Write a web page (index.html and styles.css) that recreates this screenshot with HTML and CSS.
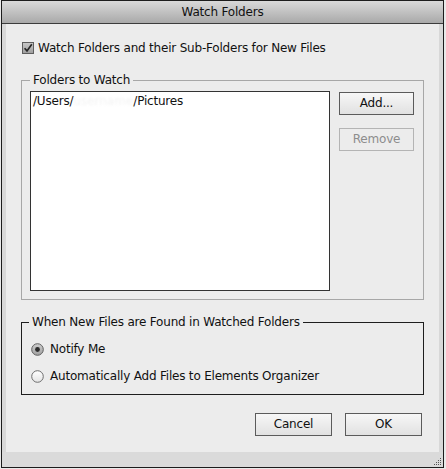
FILE: index.html
```html
<!DOCTYPE html>
<html>
<head>
<meta charset="utf-8">
<title>Watch Folders</title>
<link rel="stylesheet" href="styles.css">
</head>
<body>
<div class="window">
  <div class="titlebar">Watch Folders</div>
  <div class="main">
    <div class="panel">
      <label class="check-row">
        <svg class="checkbox" width="12" height="12" viewBox="0 0 12 12">
          <defs>
            <linearGradient id="cbg" x1="0" y1="0" x2="0" y2="1">
              <stop offset="0" stop-color="#c9c9c9"/>
              <stop offset="1" stop-color="#9d9d9d"/>
            </linearGradient>
          </defs>
          <rect x="0.5" y="0.5" width="11" height="11" fill="url(#cbg)" stroke="#5e5e5e"/>
          <path d="M2.6 6.2 L5 8.9 L9.8 2.2" fill="none" stroke="#262626" stroke-width="1.7"/>
        </svg>
        <span>Watch Folders and their Sub-Folders for New Files</span>
      </label>

      <div class="group group-light">
        <span class="group-title">Folders to Watch</span>
        <div class="group-body">
          <div class="listbox">
            <div class="list-item">/Users/<span class="blur">username</span>/Pictures</div>
          </div>
          <div class="side-buttons">
            <button class="btn">Add...</button>
            <button class="btn btn-disabled">Remove</button>
          </div>
        </div>
      </div>

      <div class="group group-dark">
        <span class="group-title">When New Files are Found in Watched Folders</span>
        <div class="radio-row">
          <svg class="radio" width="13" height="13" viewBox="0 0 13 13">
            <defs>
              <linearGradient id="rsel" x1="0" y1="0" x2="0" y2="1">
                <stop offset="0" stop-color="#cfcfcf"/>
                <stop offset="1" stop-color="#9f9f9f"/>
              </linearGradient>
            </defs>
            <circle cx="6.5" cy="6.5" r="5.8" fill="url(#rsel)" stroke="#5f5f5f"/>
            <circle cx="6.5" cy="6.5" r="2.4" fill="#2b2b2b"/>
          </svg>
          <span>Notify Me</span>
        </div>
        <div class="radio-row second">
          <svg class="radio" width="13" height="13" viewBox="0 0 13 13">
            <defs>
              <linearGradient id="runs" x1="0" y1="0" x2="0" y2="1">
                <stop offset="0" stop-color="#ffffff"/>
                <stop offset="1" stop-color="#e4e4e4"/>
              </linearGradient>
            </defs>
            <circle cx="6.5" cy="6.5" r="5.8" fill="url(#runs)" stroke="#6e6e6e"/>
          </svg>
          <span>Automatically Add Files to Elements Organizer</span>
        </div>
      </div>

      <div class="dialog-buttons">
        <button class="btn btn-wide">Cancel</button>
        <button class="btn btn-wide">OK</button>
      </div>
    </div>
  </div>
  <div class="footer">
    <svg class="grip" width="8" height="8" viewBox="0 0 8 8">
      <rect x="6" y="0" width="1" height="1" fill="#555"/>
      <rect x="4" y="2" width="1" height="1" fill="#555"/>
      <rect x="6" y="2" width="1" height="1" fill="#555"/>
      <rect x="2" y="4" width="1" height="1" fill="#555"/>
      <rect x="4" y="4" width="1" height="1" fill="#555"/>
      <rect x="6" y="4" width="1" height="1" fill="#555"/>
      <rect x="0" y="6" width="1" height="1" fill="#555"/>
      <rect x="2" y="6" width="1" height="1" fill="#555"/>
      <rect x="4" y="6" width="1" height="1" fill="#555"/>
      <rect x="6" y="6" width="1" height="1" fill="#555"/>
    </svg>
  </div>
</div>
</body>
</html>
```
FILE: styles.css
```css
* {
  box-sizing: border-box;
}

html, body {
  margin: 0;
  padding: 0;
  background: #e9e9e9;
}

body {
  font-family: "DejaVu Sans", "Liberation Sans", sans-serif;
  font-size: 12px;
  letter-spacing: -0.2px;
  color: #111;
}

.window {
  margin-left: 1px;
  width: 443px;
  height: 468px;
  border: 1px solid #1c1c1c;
  display: flex;
  flex-direction: column;
  background: #dadada;
}

.titlebar {
  height: 23px;
  flex: none;
  border-bottom: 1px solid #3c3c3c;
  background: linear-gradient(#d9d9d9, #a9a9a9);
  text-align: center;
  line-height: 22px;
  font-size: 12px;
  color: #111;
}

.main {
  flex: none;
  padding: 0 4px;
  background: #d8d8d8;
}

.panel {
  height: 428px;
  background: #ececec;
  padding: 16px 15px 0 15px;
  display: flex;
  flex-direction: column;
}

.check-row {
  display: flex;
  align-items: center;
  height: 16px;
  line-height: 16px;
  padding-left: 1px;
}

.checkbox {
  margin-right: 4px;
  flex: none;
}

.group {
  position: relative;
  border: 1px solid #a7a7a7;
}

.group-light {
  margin-top: 24px;
  height: 220px;
  padding: 10px 9px 8px 8px;
}

.group-dark {
  margin-top: 22px;
  height: 73px;
  border-color: #1e1e1e;
  padding: 18px 8px 0 9px;
}

.group-title {
  position: absolute;
  top: -9px;
  left: 8px;
  padding: 0 3px;
  line-height: 16px;
  background: #ececec;
  white-space: nowrap;
}

.group-dark .group-title {
  left: 7px;
}

.group-body {
  display: flex;
  gap: 9px;
  height: 100%;
}

.listbox {
  width: 300px;
  height: 200px;
  background: #ffffff;
  border: 1px solid #333333;
  padding: 1px 2px;
}

.list-item {
  line-height: 16px;
  white-space: nowrap;
}

.blur {
  color: #f3f3f3;
  letter-spacing: 0;
  filter: blur(1px);
}

.side-buttons {
  display: flex;
  flex-direction: column;
  gap: 13px;
  padding-top: 1px;
}

.btn {
  font-family: inherit;
  font-size: 12px;
  letter-spacing: -0.2px;
  width: 75px;
  height: 23px;
  padding: 0;
  margin: 0;
  border: 1px solid #5b5b5b;
  border-radius: 0;
  background: linear-gradient(#f7f7f7, #e1e1e1);
  color: #111;
  line-height: 21px;
  text-align: center;
}

.btn-disabled {
  border-color: #b4b4b4;
  background: #ececec;
  color: #8d8d8d;
}

.btn-wide {
  width: 77px;
}

.radio-row {
  display: flex;
  align-items: center;
  height: 16px;
  line-height: 16px;
}

.radio-row.second {
  margin-top: 11px;
}

.radio {
  flex: none;
  margin-right: 6px;
}

.dialog-buttons {
  margin-top: 18px;
  display: flex;
  justify-content: flex-end;
  gap: 13px;
  padding-right: 2px;
}

.footer {
  flex: 1;
  background: #dadada;
  display: flex;
  justify-content: flex-end;
  align-items: flex-end;
  padding: 0 1px 1px 0;
}

.grip {
  display: block;
}
```
